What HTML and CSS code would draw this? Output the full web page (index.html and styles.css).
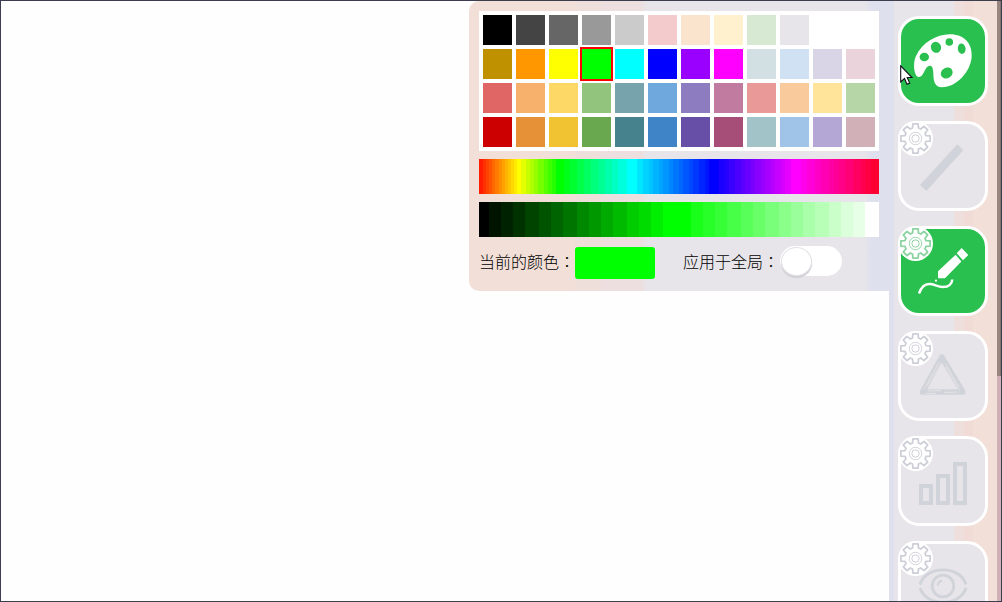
FILE: index.html
```html
<!DOCTYPE html>
<html lang="zh-CN">
<head>
<meta charset="utf-8">
<title>画板</title>
<link rel="stylesheet" href="styles.css">
</head>
<body>
<svg class="defs" width="0" height="0">
  <symbol id="gear" viewBox="-17.7 -17.7 35.4 35.4">
    <path d="M14.8-2.6V2.6L10.6 3 9.6 5.3 12.3 8.6 8.6 12.3 5.3 9.6 3 10.6 2.6 14.8H-2.6L-3 10.6-5.3 9.6-8.6 12.3-12.3 8.6-9.6 5.3-10.6 3-14.8 2.6V-2.6L-10.6-3-9.6-5.3-12.3-8.6-8.6-12.3-5.3-9.6-3-10.6-2.6-14.8H2.6L3-10.6 5.3-9.6 8.6-12.3 12.3-8.6 9.6-5.3 10.6-3Z" fill="none" stroke="currentColor" stroke-width="1.8" stroke-linejoin="round"/>
    <circle r="6.3" fill="none" stroke="currentColor" stroke-width=".9"/>
    <circle r="3.7" fill="none" stroke="currentColor" stroke-width="1"/>
  </symbol>
</svg>
<div class="window">
  <section class="panel">
    <div class="palette" id="palette"></div>
    <div class="strip" id="hues"></div>
    <div class="strip" id="shades"></div>
    <div class="settings">
      <span class="label">当前的颜色<span class="colon" lang="zh-TW">：</span></span><span class="current"></span>
      <span class="label global">应用于全局<span class="colon" lang="zh-TW">：</span></span><span class="toggle"><span class="knob"></span></span>
    </div>
  </section>
  <nav class="tools">
    <button class="tool active">
      <svg class="icon" viewBox="3 3 84 84"><path fill="#fff" d="M21 61C16 61 14.5 47 18 40 24 27 38 18.3 52 18.3 66 18.3 74 27 73.7 40 73 56 58 71.3 44 71.3 36 71 35.5 64 35.3 57 35.2 52 34 49.5 31.5 49.7 26 51 26 61 21 61Z"/>
      <g fill="#29c04f"><ellipse cx="26.3" cy="41" rx="4.7" ry="4.3"/><ellipse cx="38" cy="31.3" rx="5.1" ry="5.6" transform="rotate(-25 38 31.3)"/><circle cx="51.3" cy="26" r="3.8"/><ellipse cx="63.7" cy="32.7" rx="3.9" ry="5.2" transform="rotate(-8 63.7 32.7)"/><ellipse cx="48.7" cy="57" rx="6.2" ry="5.2" transform="rotate(-30 48.7 57)"/></g></svg>
    </button>
    <button class="tool">
      <svg class="icon" viewBox="3 3 84 84"><path fill="currentColor" d="M59.3 23.3 65.3 29.3 28.3 70 22 64Z"/></svg>
      <span class="badge"><svg><use href="#gear"/></svg></span>
    </button>
    <button class="tool active">
      <svg class="icon" viewBox="3 3 84 84"><path fill="#fff" d="M57.6 28.8 63.4 35.4 47 52.3H40V45.3ZM63.7 22 70.3 29 65 34.3 58.7 27.3Z"/><path d="M21 67.5C23 62 26 58 31 58 36 57.6 39 61 45 61 51 61 54 57.5 54.3 53.5" fill="none" stroke="#fff" stroke-width="2.5"/><circle cx="38" cy="54.7" r="1.1" fill="#fff"/></svg>
      <span class="badge"><svg><use href="#gear"/></svg></span>
    </button>
    <button class="tool">
      <svg class="icon" viewBox="3 3 84 84"><path d="M43.8 26 24.500 61H64.800Z" fill="none" stroke="currentColor" stroke-width="5.600" stroke-linejoin="round"/><path d="M41 31 26 58M42.500 33 29 55M47 32 61 56M48 36 62 60M30 60 43 59.500M46 61.500 60 61M28 62.500 38 62.500" fill="none" stroke="#e7e5e9" stroke-width=".8"/></svg>
      <span class="badge"><svg><use href="#gear"/></svg></span>
    </button>
    <button class="tool">
      <svg class="icon" viewBox="3 3 84 84"><path d="M23 50H33V67H23ZM40 40H50V67H40ZM57 28H67V67H57Z" fill="none" stroke="currentColor" stroke-width="4"/></svg>
      <span class="badge"><svg><use href="#gear"/></svg></span>
    </button>
    <button class="tool">
      <svg class="icon" viewBox="3 3 84 84"><g fill="none" stroke="currentColor" stroke-width="2.8"><path d="M22 43.5C28 24 62 24 68 43.5M22 47C28 66 62 66 68 47"/><circle cx="45" cy="45" r="10.8"/><path d="M39.5 44.5Q40 41 44 39.5" stroke-width="2"/></g></svg>
      <span class="badge"><svg><use href="#gear"/></svg></span>
    </button>
  </nav>
  <div class="scrollbar"><div class="thumb"></div></div>
</div>
<svg class="cursor" viewBox="0 0 14 21"><path d="M.7.8V17L4.500 13.500 7 19.300 9.700 18.100 7.200 12.500H12Z" fill="#fff" stroke="#10101c" stroke-width="1.100"/></svg>
<script src="script.js"></script>
</body>
</html>
```
FILE: styles.css
```css
* { box-sizing: border-box; }
body { margin: 0; background: #fff; overflow: hidden; }
.defs { position: absolute; }
.window {
  width: 1002px; height: 602px;
  border: 1px solid #3d3d50;
  background: #fefefe;
  display: flex; justify-content: flex-end; align-items: flex-start;
  overflow: hidden;
}
.panel {
  width: 420px; height: 290px; padding: 10px;
  border-radius: 10px 0 0 10px;
  background: linear-gradient(90deg, #f2dfd7 106px, #efdfda 106px 132px, #eddfdf 132px 172px, #e7e5e9 178px 396px, #dfe0ee 402px);
}
.palette {
  height: 140px; padding: 4px; background: #fff;
  display: grid; grid-template-columns: repeat(12, 29px); grid-auto-rows: 30px; gap: 4px;
}
.swatch.selected { outline: 2px solid #f00; }
.strip { display: flex; height: 35px; margin-top: 8px; }
.settings {
  display: flex; align-items: center; height: 32px; margin-top: 10px;
  font: 16px/32px "Noto Sans CJK SC", sans-serif; font-weight: 300; color: #000;
}
.label { width: 96px; height: 32px; line-height: 28px; white-space: nowrap; }
.colon { font-family: "Noto Sans CJK TC", sans-serif; }
.current { width: 80px; height: 32px; border-radius: 3px; background: #0f0; }
.global { margin-left: 28px; }
.toggle {
  width: 62px; height: 30px; margin: -4px 0 0 1px; padding: 1px;
  border-radius: 15px; background: #fff;
}
.knob {
  display: block; width: 31px; height: 29px; border-radius: 50%;
  border: 1px solid #e3e2e6; background: #fff; box-shadow: 0 2px 1px #cfcfd4;
}
.tools {
  width: 108px; height: 600px; padding: 15px 9px 0;
  display: flex; flex-direction: column; gap: 15px; overflow: hidden;
  background: linear-gradient(90deg, #dfe0ee 5px, #e7e5e9 5px 65px, #eedfdd 65px 75px, #f0dbd7 75px 84px, #f2dfd7 84px);
}
.tool {
  position: relative; flex: none; width: 90px; height: 90px; padding: 0;
  border: 3px solid #fff; border-radius: 21px;
  background: #e7e5e9; color: #d0d3d9;
}
.tool.active { background: #29c04f; }
.icon { display: block; width: 84px; height: 84px; }
.badge {
  position: absolute; left: -3px; top: -3px; width: 35px; height: 35px;
  border-radius: 50%; background: #fff; color: #cdced7;
}
.badge svg { display: block; width: 35px; height: 35px; }
.active .badge { color: #8bd3a0; }
.scrollbar { width: 4px; height: 600px; background: #d0afb7; }
.thumb { height: 375px; background: #988680; border-right: 1px solid #85736e; }
.cursor { position: absolute; left: 900px; top: 65px; width: 14px; height: 21px; }
```
FILE: script.js
```js
const rows = [
  ["#000", "#444", "#666", "#999", "#cbcbcb", "#f4cbcc", "#fbe4cd", "#fff1cd", "#d8e9d3", "#e7e5e9", "", ""],
  ["#bf9000", "#ff9800", "#ff0", "#0f0", "#0ff", "#00f", "#90f", "#f0f", "#d2dfe3", "#cfe1f3", "#d9d5e7", "#ead3da"],
  ["#e06666", "#f7b16c", "#fed867", "#93c47d", "#77a4ac", "#6fa8dc", "#8e7cc0", "#c27ba0", "#ea9999", "#f9ca9c", "#ffe499", "#b6d6a8"],
  ["#c00", "#e69138", "#f1c232", "#6aa84f", "#46818e", "#3e84c6", "#674ea7", "#a64e78", "#a2c3c8", "#9fc4e8", "#b4a7d5", "#d1b0b7"]
];
const palette = document.getElementById("palette");
rows.flat().forEach((color) => {
  const cell = document.createElement("span");
  cell.className = color === "#0f0" ? "swatch selected" : "swatch";
  cell.style.background = color;
  palette.append(cell);
});

function fill(id, edges, colorAt) {
  const strip = document.getElementById(id);
  for (let i = 0; i < edges.length - 1; i++) {
    const part = document.createElement("span");
    part.style.width = edges[i + 1] - edges[i] + "px";
    part.style.background = colorAt(i, (edges[i] + edges[i + 1]) / 2);
    strip.append(part);
  }
}

const stops = [[0, [255, 16, 0]], [40, [255, 255, 0]], [81, [0, 255, 0]], [153, [0, 255, 255]],
  [235, [0, 0, 255]], [317, [255, 0, 255]], [400, [255, 0, 40]]];
const hueEdges = [0, 4, 7, 10, 13, 16, 20, 23, 26, 29, 32, 35, 38, 42, 47, 51, 55, 59, 65, 69, 73, 77, 85, 91, 98, 105, 112, 119,
  126, 133, 139, 148, 158, 164, 170, 174, 180, 184, 190, 194, 200, 204, 210, 214, 220, 226, 230, 240, 246, 250, 256, 262,
  266, 272, 276, 282, 286, 292, 296, 302, 306, 312, 322, 328, 336, 342, 350, 355, 360, 366, 374, 382, 386, 392, 400];
fill("hues", hueEdges, (i, x) => {
  const n = stops.findIndex((s) => s[0] >= x);
  const [x0, a] = stops[n - 1];
  const [x1, b] = stops[n];
  return `rgb(${a.map((v, k) => Math.round(v + (b[k] - v) * (x - x0) / (x1 - x0))).join(",")})`;
});

const shadeEdges = [0, 10, 22, 34, 46, 60, 72, 84, 98, 110, 122, 134, 148, 160, 172, 184, 212, 224, 236, 248, 262, 274,
  286, 300, 312, 324, 336, 350, 362, 374, 386, 400];
const dark = [0, 20, 34, 50, 68, 84, 100, 118, 136, 152, 170, 186, 204, 220, 238, 255];
const light = [26, 40, 54, 72, 88, 104, 122, 138, 154, 170, 184, 202, 218, 230, 255];
fill("shades", shadeEdges, (i) =>
  i < 16 ? `rgb(0,${dark[i]},0)` : `rgb(${light[i - 16]},255,${light[i - 16]})`);
```
